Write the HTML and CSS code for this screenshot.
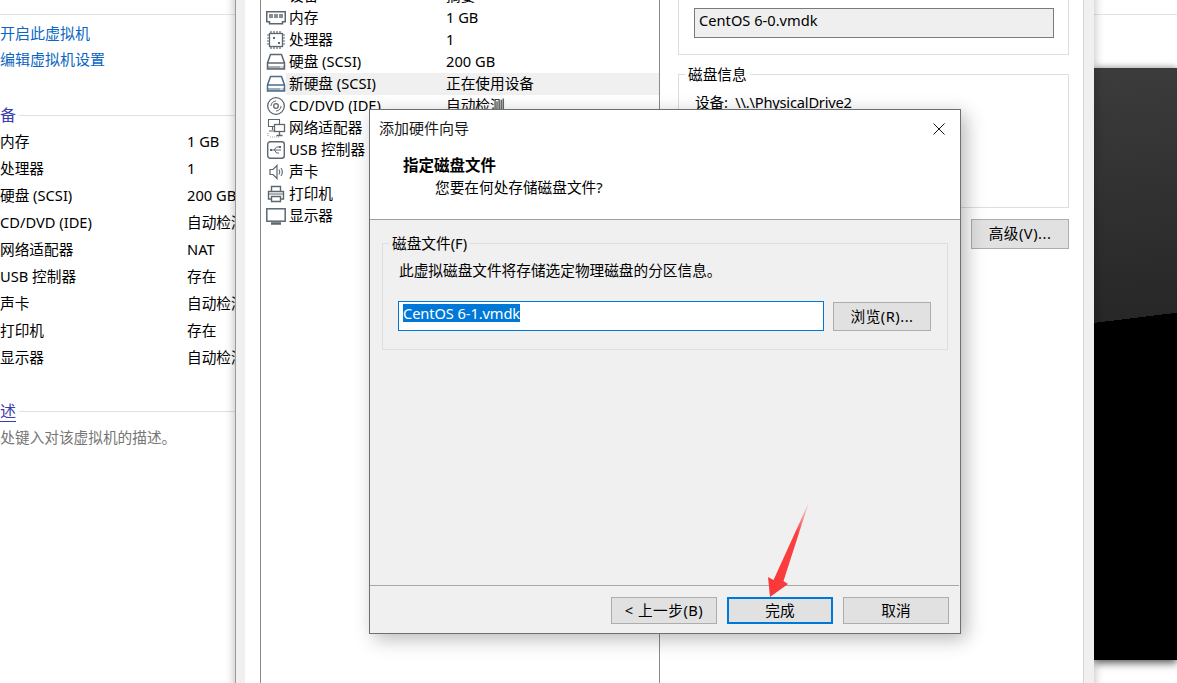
FILE: index.html
```html
<!DOCTYPE html>
<html lang="zh-CN">
<head>
<meta charset="utf-8">
<title>添加硬件向导</title>
<link rel="stylesheet" href="styles.css">
</head>
<body>
<svg class="defs" width="0" height="0" aria-hidden="true">
  <symbol id="hdd" viewBox="0 0 20 20">
    <path d="M4.500 2.500h11l3 8.500v6h-17v-6z M1.500 11h17" fill="none" stroke="currentColor" stroke-width="1.500"/>
    <path d="M2 14h16v3H2z" fill="currentColor" opacity=".55"/>
    <path d="M14 15h3" stroke="#fff" stroke-width="1"/>
  </symbol>
</svg>
<main class="desktop">

  <section class="summary">
    <div class="rule"></div>
    <nav class="actions">
      <a class="action">开启此虚拟机</a>
      <a class="action">编辑虚拟机设置</a>
    </nav>
    <h2 class="heading heading--devices"><span class="heading-text">设备</span><span class="heading-line"></span></h2>
    <dl class="specs">
      <dt>内存</dt><dd>1 GB</dd>
      <dt>处理器</dt><dd>1</dd>
      <dt>硬盘 (SCSI)</dt><dd>200 GB</dd>
      <dt>CD/DVD (IDE)</dt><dd>自动检测</dd>
      <dt>网络适配器</dt><dd>NAT</dd>
      <dt>USB 控制器</dt><dd>存在</dd>
      <dt>声卡</dt><dd>自动检测</dd>
      <dt>打印机</dt><dd>存在</dd>
      <dt>显示器</dt><dd>自动检测</dd>
    </dl>
    <h2 class="heading heading--desc"><span class="heading-text heading-text--link">描述</span><span class="heading-line"></span></h2>
    <p class="desc">在此处键入对该虚拟机的描述。</p>
  </section>

  <div class="console"></div>

  <section class="settings">
    <div class="settings-inner">
      <div class="tree">
        <div class="row"><span></span><div class="row-body"><span>设备</span><span>摘要</span></div></div>
        <div class="row">
          <svg class="icon" viewBox="0 0 20 20"><path d="M.75 3.750h18.500v10H16.500v2h-13v-2H.75z" fill="none" stroke="currentColor" stroke-width="1.500"/><path d="M3 6h4v4H3zM8 6h4v4H8zM13 6h4v4h-4z" fill="currentColor" opacity=".75"/></svg>
          <div class="row-body"><span>内存</span><span>1 GB</span></div>
        </div>
        <div class="row">
          <svg class="icon" viewBox="0 0 20 20"><rect x="3.500" y="3.500" width="13" height="13" fill="none" stroke="currentColor" stroke-width="1.300"/><path d="M5 1v2M8 1v2M11 1v2M14 1v2M5 17v2M8 17v2M11 17v2M14 17v2M1 5h2M1 8h2M1 11h2M1 14h2M17 5h2M17 8h2M17 11h2M17 14h2" stroke="currentColor" stroke-width="1.200"/><path d="M7 7h2v2H7zM12 12h2v2h-2z" fill="currentColor"/></svg>
          <div class="row-body"><span>处理器</span><span>1</span></div>
        </div>
        <div class="row">
          <svg class="icon"><use href="#hdd"/></svg>
          <div class="row-body"><span>硬盘 (SCSI)</span><span>200 GB</span></div>
        </div>
        <div class="row">
          <svg class="icon icon--active"><use href="#hdd"/></svg>
          <div class="row-body row-body--selected"><span>新硬盘 (SCSI)</span><span>正在使用设备</span></div>
        </div>
        <div class="row">
          <svg class="icon" viewBox="0 0 20 20"><circle cx="10" cy="10" r="8.300" fill="none" stroke="currentColor" stroke-width="1.300"/><circle cx="10" cy="10" r="2.300" fill="none" stroke="currentColor" stroke-width="1.300"/><path d="M5 10a5 5 0 0 1 5-5M15 10a5 5 0 0 1-5 5" fill="none" stroke="currentColor" stroke-width="1"/></svg>
          <div class="row-body"><span>CD/DVD (IDE)</span><span>自动检测</span></div>
        </div>
        <div class="row">
          <svg class="icon" viewBox="0 0 20 20"><path d="M2.500 1.500h11v7h-11zM6.500 8v4M3 13h7" fill="none" stroke="currentColor" stroke-width="1.100"/><rect x="8.500" y="6.500" width="10" height="7" fill="#fff" stroke="currentColor" stroke-width="1.300"/><path d="M13.500 14v3M10.500 17.500h6" stroke="currentColor" stroke-width="1.300"/><path d="M2 15v4M4 19h9" stroke="currentColor" stroke-width="1.200" stroke-dasharray="1 1" opacity=".6"/></svg>
          <div class="row-body"><span>网络适配器</span><span>NAT</span></div>
        </div>
        <div class="row">
          <svg class="icon" viewBox="0 0 20 20"><rect x="1.700" y="1.700" width="16.600" height="16.600" rx="2.500" fill="none" stroke="currentColor" stroke-width="1.400"/><path d="M5 10h10M8 10l2.500-3h2.500M8.500 10l2 3h2.500" fill="none" stroke="currentColor" stroke-width="1"/><path d="M4 9h2v2H4zM13 6h2v2h-2z" fill="currentColor"/></svg>
          <div class="row-body"><span>USB 控制器</span><span>存在</span></div>
        </div>
        <div class="row">
          <svg class="icon" viewBox="0 0 20 20"><path d="M4 7.500h3l4-4v13l-4-4H4z" fill="none" stroke="currentColor" stroke-width="1.200"/><path d="M13 7.500c1 1.500 1 3.500 0 5M15 6c1.700 2.500 1.700 5.500 0 8" fill="none" stroke="currentColor" stroke-width="1.100"/></svg>
          <div class="row-body"><span>声卡</span><span>自动检测</span></div>
        </div>
        <div class="row">
          <svg class="icon" viewBox="0 0 20 20"><path d="M5.500 7V2.500h9V7M5 15H2.500V7.500h15V15H15" fill="none" stroke="currentColor" stroke-width="1.400"/><path d="M5.500 12.500h9v5h-9z" fill="none" stroke="currentColor" stroke-width="1.400"/><path d="M3 10h14" stroke="currentColor" stroke-width="1"/></svg>
          <div class="row-body"><span>打印机</span><span>存在</span></div>
        </div>
        <div class="row">
          <svg class="icon" viewBox="0 0 20 20"><rect x=".8" y="2.800" width="18.400" height="12.400" fill="none" stroke="currentColor" stroke-width="1.500"/><path d="M5 17.500h10" stroke="currentColor" stroke-width="2.500"/></svg>
          <div class="row-body"><span>显示器</span><span>自动检测</span></div>
        </div>
      </div>

      <div class="pane">
        <div class="group group--file">
          <div class="field-readonly">CentOS 6-0.vmdk</div>
        </div>
        <div class="group group--info">
          <div class="group-title">磁盘信息</div>
          <div class="info-line">设备: \\.\PhysicalDrive2</div>
        </div>
        <button class="btn btn--advanced btn--spaced">高级(V)...</button>
      </div>
    </div>
  </section>

  <section class="dialog">
    <header class="titlebar">
      <span>添加硬件向导</span>
      <svg class="close" viewBox="0 0 12 12"><path d="M.5.5l11 11M11.500.5l-11 11" stroke="#111" stroke-width="1" fill="none"/></svg>
    </header>
    <div class="wizard-head">
      <div class="wizard-title">指定磁盘文件</div>
      <div class="wizard-sub">您要在何处存储磁盘文件?</div>
    </div>
    <div class="wizard-body">
      <div class="group group--disk">
        <div class="group-title">磁盘文件(F)</div>
        <p class="group-text">此虚拟磁盘文件将存储选定物理磁盘的分区信息。</p>
        <div class="file-row">
          <div class="field"><span class="selection">CentOS 6-1.vmdk</span></div>
          <button class="btn btn--browse btn--spaced">浏览(R)...</button>
        </div>
      </div>
      <footer class="wizard-foot">
        <button class="btn btn--foot btn--spaced">&lt; 上一步(B)</button>
        <button class="btn btn--foot btn--primary">完成</button>
        <button class="btn btn--foot">取消</button>
      </footer>
    </div>
  </section>

  <svg class="arrow" viewBox="0 0 50 100">
    <defs>
      <linearGradient id="fade" x1="1" y1="0" x2="0" y2="1">
        <stop offset="0" stop-color="#ff6a6a" stop-opacity=".2"/>
        <stop offset=".3" stop-color="#fb4040"/>
        <stop offset="1" stop-color="#f93838"/>
      </linearGradient>
    </defs>
    <path d="M46 0 20.500 79 25 82 7 95 5 75 10.500 78z" fill="url(#fade)"/>
  </svg>
</main>
</body>
</html>
```
FILE: styles.css
```css
* { box-sizing: border-box; }
html, body { margin: 0; padding: 0; }
body {
  width: 1177px;
  height: 683px;
  overflow: hidden;
  background: #fff;
  color: #000;
  font: 14.67px/22px "Noto Sans", "Noto Sans CJK SC", sans-serif;
}
.defs { position: absolute; }
.desktop { position: relative; width: 1177px; height: 683px; overflow: hidden; background: #fff; }

/* Window behind */
.summary { position: absolute; left: -29px; top: 0; width: 1206px; }
.rule { height: 1px; margin-top: 14px; background: #e3e3e3; }
.actions { display: flex; flex-direction: column; padding: 5px 0 0 29px; }
.action { height: 26px; line-height: 26px; font-size: 15px; color: #0a66c2; }
.heading { display: flex; align-items: center; gap: 3px; width: 265px; height: 24px; margin: 0; font-size: 16px; font-weight: 400; color: #3c3cab; }
.heading--devices { margin-top: 31px; padding-left: 13px; }
.heading--desc { margin-top: 28px; padding-left: 13px; }
.heading-text { line-height: 22px; }
.heading-text--link { border-bottom: 1px solid #3c3cab; line-height: 20px; }
.heading-line { flex: 1; height: 1px; background: #e0e0e0; }
.specs { display: grid; grid-template-columns: 187px 100px; grid-auto-rows: 27px; width: 316px; margin: 1px 0 0; padding-left: 29px; line-height: 27px; }
.specs dt, .specs dd { margin: 0; white-space: nowrap; }
.desc { margin: 3px 0 0; color: #767676; line-height: 22px; white-space: nowrap; }

.console {
  position: absolute;
  left: 1094px;
  top: 68px;
  width: 83px;
  height: 592px;
  background: linear-gradient(173deg, #3c3c3c 0, #272727 253px, #000 253px);
  box-shadow: 0 3px 8px rgba(0, 0, 0, .65), 0 -2px 6px rgba(0, 0, 0, .15);
}

/* Settings window */
.settings {
  position: absolute;
  left: 235px;
  top: -15px;
  width: 859px;
  height: 720px;
  padding: 0 10px 0 9px;
  background: #f0f0f0;
  border-left: 1px solid #9a9a9a;
  box-shadow: 0 0 10px rgba(0, 0, 0, .28);
}
.settings-inner { display: flex; height: 100%; background: #fff; border-right: 1px solid #d6d6d6; }
.tree { flex: 0 0 400px; margin-left: 15px; padding-left: 5px; border-left: 1px solid #8a8a8a; border-right: 1px solid #8a8a8a; }
.row { display: grid; grid-template-columns: 20px 1fr; align-items: center; height: 22px; line-height: 21px; }
.row-body { display: grid; grid-template-columns: 157px 1fr; height: 22px; padding-left: 3px; white-space: nowrap; }
.row-body--selected { background: #f0f0f0; }
.icon { display: block; width: 20px; height: 20px; color: #5d6770; }
.icon--active { color: #4a6d8c; }

.pane { flex: 1; display: flex; flex-direction: column; align-items: flex-start; padding-left: 18px; background: #fff; }
.group { border: 1px solid #dedede; background: inherit; padding: 0 16px; }
.group--file { width: 391px; height: 70px; padding-top: 22px; }
.group--info { width: 391px; height: 134px; margin-top: 19px; }
.group-title { width: fit-content; margin: -12px 0 0 -10px; padding: 0 3px; background: inherit; line-height: 22px; }
.info-line { margin-top: 6px; word-spacing: 4px; letter-spacing: -.2px; white-space: nowrap; }
.field-readonly { width: 360px; height: 30px; margin-left: -1px; padding-left: 4px; line-height: 22px; background: #efefef; border: 1px solid #7a7a7a; }

.btn { display: block; margin: 0; padding: 0 0 2px; font: inherit; color: #000; background: #e1e1e1; border: 1px solid #adadad; }
.btn--spaced { letter-spacing: .5px; }
.btn--advanced { align-self: flex-end; width: 98px; height: 30px; margin: 11px 14px 0 0; }
.btn--browse { width: 98px; height: 29px; margin-top: 1px; }
.btn--foot { width: 106px; height: 27px; line-height: 22px; }
.btn--primary { border: 2px solid #0078d7; }

/* Dialog */
.dialog {
  position: absolute;
  left: 369px;
  top: 109px;
  width: 592px;
  height: 525px;
  display: flex;
  flex-direction: column;
  background: #fff;
  border: 1px solid #6f6f6f;
  box-shadow: 5px 5px 18px rgba(0, 0, 0, .28);
}
.titlebar { flex: 0 0 38px; display: flex; align-items: center; justify-content: space-between; padding: 0 15px 2px 9px; font-size: 15px; color: #1a1a1a; }
.close { display: block; width: 12px; height: 12px; margin-top: 2px; }
.wizard-head { flex: 0 0 71px; padding: 6px 0 0 33px; }
.wizard-title { font-size: 15.5px; font-weight: 700; }
.wizard-sub { padding-left: 32px; }
.wizard-body { flex: 1; display: flex; flex-direction: column; background: #f0f0f0; border-top: 1px solid #a0a0a0; }
.group--disk { width: 566px; height: 107px; margin: 23px 0 0 12px; }
.group-text { margin: 6px 0 0; line-height: 20px; }
.file-row { display: flex; align-items: flex-start; gap: 9px; margin: 21px 0 0 -1px; }
.field { width: 426px; height: 30px; padding: 2px 0 0 4px; background: #fff; border: 1px solid #0078d7; }
.selection { display: block; width: fit-content; height: 18px; line-height: 18px; letter-spacing: -.1px; color: #fff; background: #0078d7; }
.wizard-foot { display: flex; justify-content: flex-end; gap: 10px; margin: auto 1px 0 0; height: 48px; padding: 11px 10px 0 0; border-top: 1px solid #a8a8a8; }

.arrow { position: absolute; left: 763px; top: 502px; width: 50px; height: 100px; }
```
